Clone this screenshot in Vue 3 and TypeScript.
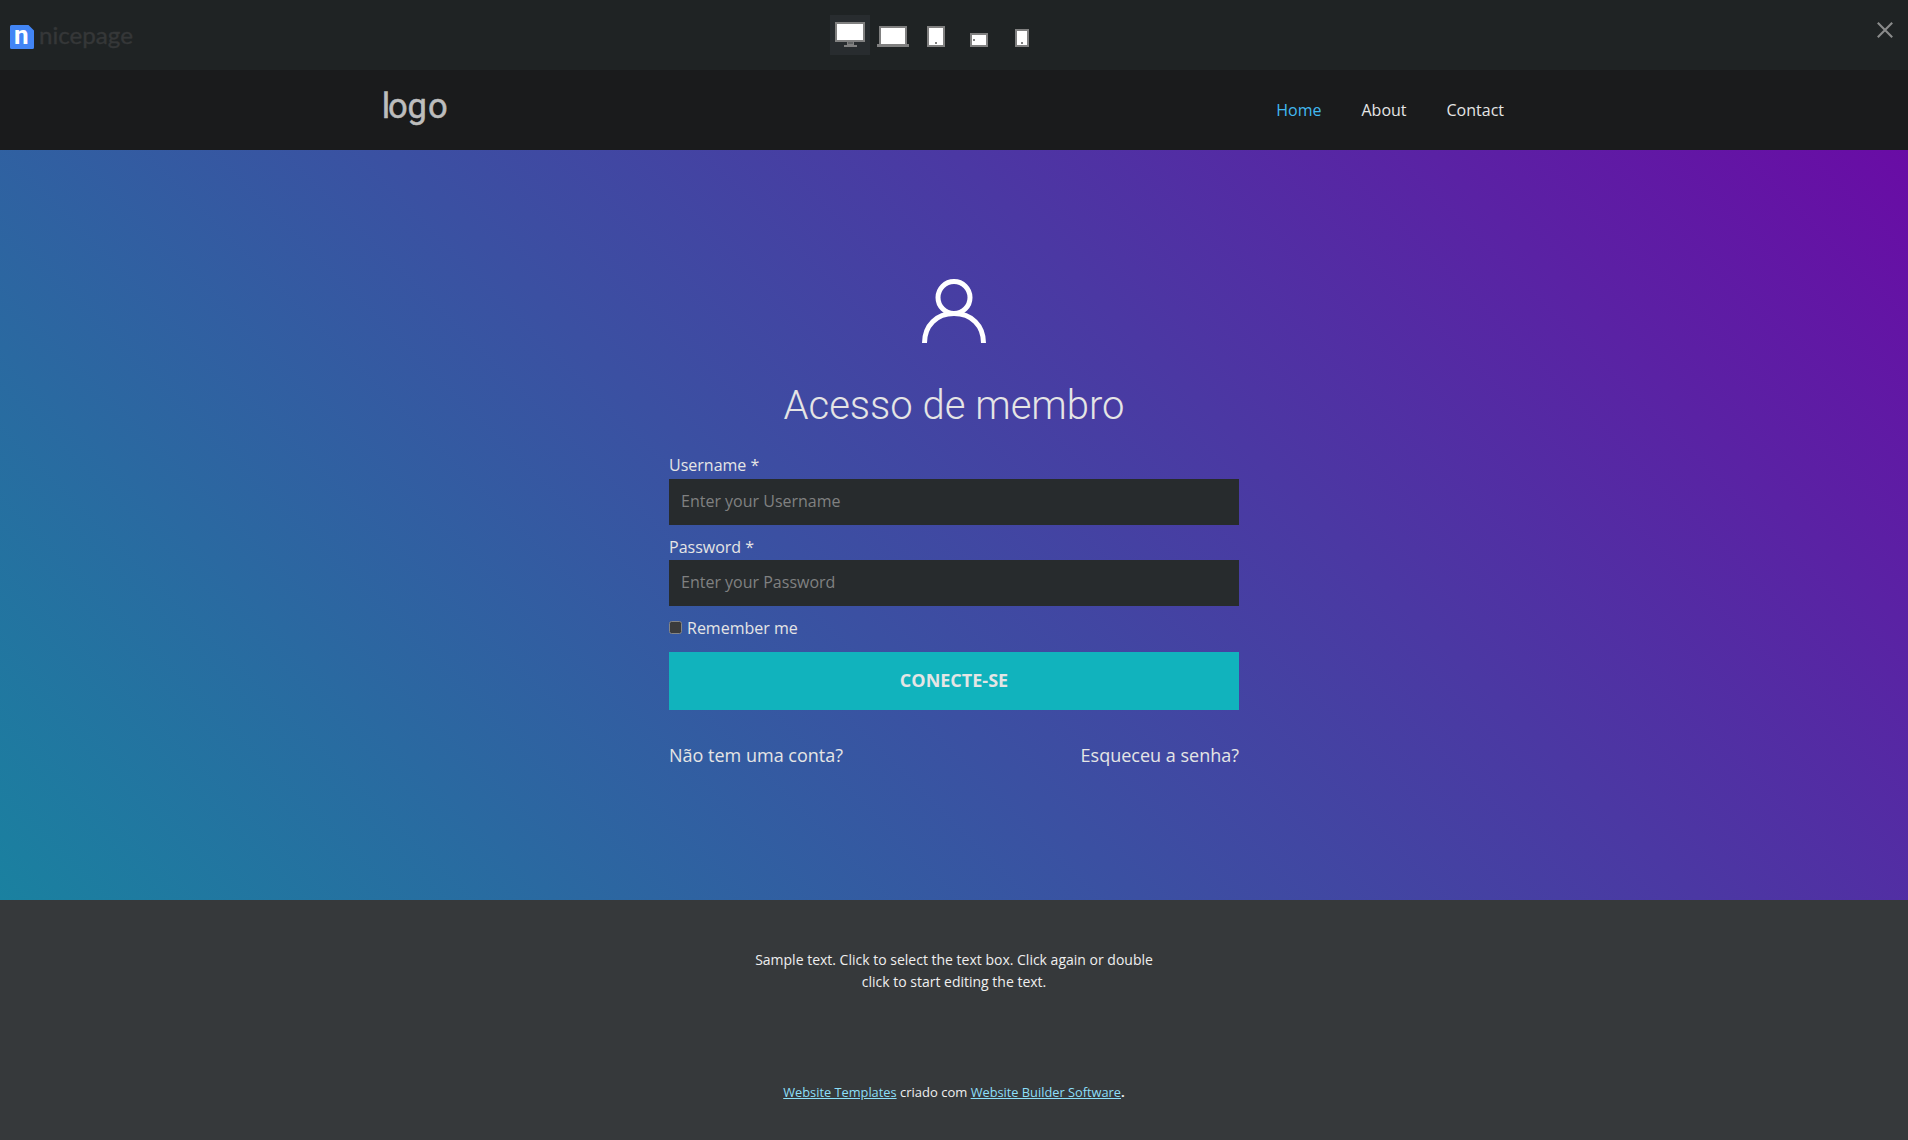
<script setup lang="ts">
import { ref } from 'vue'

interface NavItem {
  label: string
  active?: boolean
}

const navItems: NavItem[] = [
  { label: 'Home', active: true },
  { label: 'About' },
  { label: 'Contact' },
]

const username = ref('')
const password = ref('')
const remember = ref(false)
</script>

<template>
  <div class="page">
    <div class="topbar">
      <svg class="brand" width="140" height="40" viewBox="0 0 140 40">
        <path d="M1.5 7H18.5L24 12.5V29.5A1.5 1.5 0 0 1 22.500 31H1.500A1.5 1.500 0 0 1 0 29.500V8.500A1.500 1.500 0 0 1 1.500 7Z" fill="#4285f5" />
        <text class="brand-mark" x="3.900" y="26">n</text>
        <text class="brand-name" x="29" y="26" textLength="94" lengthAdjust="spacingAndGlyphs">nicepage</text>
      </svg>
      <div class="devices">
        <button class="device selected" aria-label="Desktop">
          <svg width="40" height="40" shape-rendering="crispEdges">
            <rect x="5" y="7" width="30" height="20" rx="1" fill="#808080" />
            <rect x="7" y="9" width="26" height="16" fill="#fff" />
            <path d="M17 27h7v3h3v2H14v-2h3z" fill="#808080" />
            <path d="M18 27h5v2h-5z" fill="#606263" />
          </svg>
        </button>
        <button class="device" aria-label="Laptop">
          <svg width="40" height="40" shape-rendering="crispEdges">
            <rect x="6" y="11" width="28" height="20" rx="1" fill="#808080" />
            <rect x="8" y="13" width="24" height="16" fill="#fff" />
            <rect x="4" y="29" width="32" height="3" fill="#808080" />
          </svg>
        </button>
        <button class="device" aria-label="Tablet">
          <svg width="40" height="40" shape-rendering="crispEdges">
            <rect x="11" y="11" width="18" height="21" rx="1" fill="#808080" />
            <rect x="13" y="13" width="14" height="17" fill="#fff" />
            <rect x="19" y="27" width="2" height="2" fill="#808080" />
          </svg>
        </button>
        <button class="device" aria-label="Phone landscape">
          <svg width="40" height="40" shape-rendering="crispEdges">
            <rect x="11" y="18" width="18" height="14" rx="1" fill="#808080" />
            <rect x="13" y="20" width="14" height="10" fill="#fff" />
            <rect x="14" y="24" width="2" height="2" fill="#808080" />
          </svg>
        </button>
        <button class="device" aria-label="Phone">
          <svg width="40" height="40" shape-rendering="crispEdges">
            <rect x="13" y="14" width="14" height="18" rx="1" fill="#808080" />
            <rect x="15" y="16" width="10" height="14" fill="#fff" />
            <rect x="19" y="27" width="2" height="2" fill="#808080" />
          </svg>
        </button>
      </div>
      <svg class="close" width="16" height="16" viewBox="0 0 16 16">
        <path d="M.8.800 15.200 15.200M15.200.800.800 15.200" stroke="#8a8b8b" stroke-width="2.100" />
      </svg>
    </div>

    <header class="header">
      <svg class="logo" width="66" height="40" viewBox="0 0 66 40">
        <text class="logo-text" x="-2.200 3.900 23.400 44" y="26.500">logo</text>
      </svg>
      <nav class="nav">
        <a v-for="item in navItems" :key="item.label" :class="{ active: item.active }">{{ item.label }}</a>
      </nav>
    </header>

    <main class="hero">
      <svg class="person" width="64" height="64" viewBox="0 0 64 64" fill="none" stroke="#fff" stroke-width="5">
        <circle cx="32" cy="18.500" r="16" />
        <path d="M2.500 64C2.500 46.500 14.500 34.500 32 34.500S61.500 46.500 61.500 64" />
      </svg>
      <h1>Acesso de membro</h1>
      <form class="form" @submit.prevent>
        <label class="label" for="username">Username *</label>
        <input id="username" v-model="username" class="field" type="text" placeholder="Enter your Username" />
        <label class="label second" for="password">Password *</label>
        <input id="password" v-model="password" class="field" type="password" placeholder="Enter your Password" />
        <label class="remember">
          <input v-model="remember" type="checkbox" class="check" />
          <span>Remember me</span>
        </label>
        <button class="submit" type="submit">CONECTE-SE</button>
      </form>
      <div class="links">
        <a>Não tem uma conta?</a>
        <a>Esqueceu a senha?</a>
      </div>
    </main>

    <footer class="footer">
      <p class="sample">Sample text. Click to select the text box. Click again or double<br />click to start editing the text.</p>
      <p class="credits"><a>Website Templates</a><span> criado com </span><a>Website Builder Software</a><b>.</b></p>
    </footer>
  </div>
</template>

<style>
body {
  background: #36393b;
}
</style>

<style scoped>
.page {
  height: 1140px;
  overflow: hidden;
  display: flex;
  flex-direction: column;
  font-family: "Open Sans", sans-serif;
  font-size: 16px;
  color: #e5e5e5;
}
.topbar {
  height: 70px;
  flex: none;
  box-sizing: border-box;
  background: #1f2324;
  display: grid;
  grid-template-columns: 1fr auto 1fr;
  align-items: start;
  padding: 15px 15px 0 10px;
}
.brand {
  margin-top: 3px;
}
.brand-mark {
  font: 700 26px Roboto, sans-serif;
  fill: #fff;
}
.brand-name {
  font: 400 24px Lato, sans-serif;
  fill: #353738;
  stroke: #353738;
  stroke-width: 0.4px;
}
.devices {
  display: flex;
  gap: 3px;
  padding-right: 31px;
}
.device {
  width: 40px;
  height: 40px;
  padding: 0;
  border: 0;
  background: transparent;
}
.device svg {
  display: block;
}
.device.selected {
  background: #282c2f;
}
.close {
  justify-self: end;
  margin-top: 7px;
}
.header {
  height: 80px;
  flex: none;
  background: #1a1b1c;
  display: flex;
  justify-content: space-between;
  padding: 0 404px 0 384px;
}
.logo {
  margin-top: 20px;
  overflow: visible;
  transform: translateY(1px);
}
.logo-text {
  font: 400 34.5px Roboto, sans-serif;
  fill: #bdbdbd;
  stroke: #bdbdbd;
  stroke-width: 0.5px;
}
.nav {
  display: flex;
  gap: 40px;
  line-height: 22px;
  padding-top: 29px;
}
.nav .active {
  color: #42b9f0;
}
.hero {
  height: 750px;
  flex: none;
  box-sizing: border-box;
  background: linear-gradient(45deg, #1a81a0 0%, #4b38a3 64%, #690ca5 100%);
  display: flex;
  flex-direction: column;
  align-items: center;
  padding-top: 129px;
}
.person {
  display: block;
}
h1 {
  margin: 39px 0 0;
  font: 300 40px/48px Roboto, sans-serif;
}
.form {
  width: 570px;
  margin-top: 24px;
  display: flex;
  flex-direction: column;
}
.label {
  line-height: 22px;
  height: 25px;
}
.label.second {
  margin-top: 11px;
  height: 24px;
}
.field {
  box-sizing: border-box;
  height: 46px;
  border: 0;
  padding: 0 12px 2px;
  background: #272b2d;
  color: #e5e5e5;
  font: inherit;
}
.field::placeholder {
  color: #808181;
}
.remember {
  display: flex;
  align-items: center;
  gap: 5px;
  line-height: 22px;
  margin-top: 11px;
}
.check {
  appearance: none;
  box-sizing: border-box;
  width: 13px;
  height: 13px;
  margin: 0 0 2px;
  border: 1px solid #858585;
  border-radius: 2.5px;
  background: #3b3b3b;
}
.submit {
  height: 58px;
  margin-top: 13px;
  border: 0;
  padding: 0 0 2px;
  background: #11b3bd;
  color: #e5e5e5;
  font: 700 18px "Open Sans", sans-serif;
}
.links {
  width: 570px;
  display: flex;
  justify-content: space-between;
  margin-top: 33px;
  font-size: 18px;
  line-height: 25px;
}
.footer {
  flex: 1;
  background: #36393b;
  text-align: center;
  color: #efefef;
}
.sample {
  margin: 49px 0 0;
  font-size: 14px;
  line-height: 22px;
}
.credits {
  margin: 89px 0 0;
  font-size: 13px;
  line-height: 20px;
  white-space: pre;
}
.credits a {
  font-size: 12.8px;
  color: #8cdff8;
  text-decoration: underline;
}
</style>
